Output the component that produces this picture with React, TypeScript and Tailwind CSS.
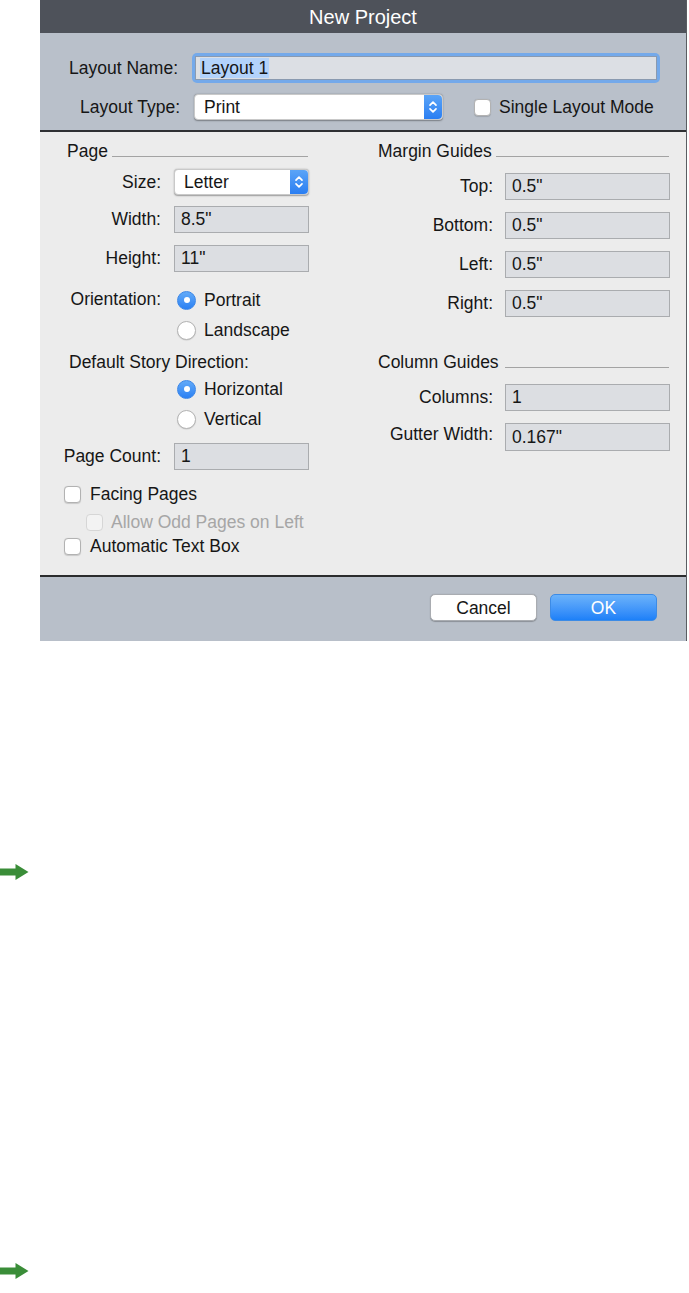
import React from 'react';

const FONT = { fontFamily: '"Liberation Sans", Arial, sans-serif' };

// blue up/down stepper on the right of a popup button
const Stepper = () => (
    <div className="w-[18px] h-full rounded-r-[4px] bg-gradient-to-b from-[#5aa4f7] to-[#2a7ef2] flex items-center justify-center">
        <svg width="10" height="14" viewBox="0 0 10 14" fill="none" stroke="white" strokeWidth="1.7" strokeLinecap="round" strokeLinejoin="round">
            <path d="M2 5.2 L5 2.2 L8 5.2" />
            <path d="M2 8.8 L5 11.8 L8 8.8" />
        </svg>
    </div>
);

const Select: React.FC<{ value: string; width: string }> = ({ value, width }) => (
    <div className={`${width} h-[26px] flex rounded-[4px] bg-white shadow-[0_0.5px_1.5px_rgba(0,0,0,0.35)] border border-[#c9c9c9]`}>
        <div className="flex-1 flex items-center pl-[9px] text-[#161616]">{value}</div>
        <Stepper />
    </div>
);

const Field: React.FC<{ value: string; width: string; h?: string }> = ({ value, width, h = 'h-[27px]' }) => (
    <div className={`${width} ${h} flex items-center pl-[6px] bg-[#dcdee2] border border-[#aaacaf] text-[#161616]`}>
        {value}
    </div>
);

const Radio: React.FC<{ on?: boolean }> = ({ on }) =>
    on ? (
        <div className="w-[19px] h-[19px] rounded-full bg-gradient-to-b from-[#62aaf8] to-[#2a80f3] border border-[#3a86e8] flex items-center justify-center">
            <div className="w-[6px] h-[6px] rounded-full bg-white" />
        </div>
    ) : (
        <div className="w-[19px] h-[19px] rounded-full bg-white border border-[#b4b4b4] shadow-[0_0.5px_1px_rgba(0,0,0,0.15)]" />
    );

const Check: React.FC<{ disabled?: boolean }> = ({ disabled }) => (
    <div
        className={`w-[17px] h-[17px] rounded-[4px] border ${disabled ? 'bg-[#f3f3f3] border-[#d6d6d6]' : 'bg-white border-[#b2b2b2] shadow-[0_0.5px_1px_rgba(0,0,0,0.15)]'}`}
    />
);

const Header: React.FC<{ title: string; pad: string; gap: string; end: string }> = ({ title, pad, gap, end }) => (
    <div className={`flex items-end h-[22px] ${pad} ${end}`}>
        <span className="leading-[22px]">{title}</span>
        <div className={`flex-1 ${gap} mb-[5px] h-px bg-[#a3a3a3]`} />
    </div>
);

const Arrow = () => (
    <svg width="29" height="16" viewBox="0 0 29 16">
        <path d="M0 4.5 H15.5 V0 L28.5 8 L15.5 16 V11.5 H0 Z" fill="#3a8d38" />
    </svg>
);

export default function App() {
    return (
        <div className="bg-white min-h-[1293px] text-[17.5px]" style={FONT}>
            <div className="ml-[40px] w-[647px] border-r border-[#5a5d62]">
                {/* title bar */}
                <div className="h-[33px] bg-[#4e525a] flex items-center justify-center text-white text-[20px] font-medium">
                    New Project
                </div>

                {/* top section */}
                <div className="bg-[#b9c0ca] pt-[20px] pb-[10px] border-b-2 border-[#2f3033]">
                    <div className="flex items-center h-[30px]">
                        <div className="w-[138px] text-right text-[#161616]">Layout Name:</div>
                        <div className="ml-[14px] w-[468px] h-[30px] rounded-[5px] bg-[#74a9ea] p-[3px]">
                            <div className="h-full bg-[#dcdfe4] border border-[#8a9ab0] flex items-center pl-[4px]">
                                <span className="bg-[#b3d3fb] leading-[20px] px-[1px] text-[#161616]">Layout 1</span>
                            </div>
                        </div>
                    </div>
                    <div className="flex items-center h-[26px] mt-[11px]">
                        <div className="w-[140px] text-right text-[#161616]">Layout Type:</div>
                        <div className="ml-[14px]">
                            <Select value="Print" width="w-[249px]" />
                        </div>
                        <div className="ml-[31px]">
                            <Check />
                        </div>
                        <span className="ml-[8px] text-[#161616]">Single Layout Mode</span>
                    </div>
                </div>

                {/* main panel */}
                <div className="bg-[#ececec] h-[445px] grid grid-cols-[300px_1fr] border-b-2 border-[#2a2b2d] text-[#161616]">
                    {/* left column */}
                    <div className="pt-[8px]">
                        <Header title="Page" pad="pl-[27px]" gap="ml-[4px]" end="mr-[32px]" />
                        <div className="flex items-center h-[26px] mt-[7px]">
                            <div className="w-[121px] text-right">Size:</div>
                            <div className="ml-[13px]">
                                <Select value="Letter" width="w-[135px]" />
                            </div>
                        </div>
                        <div className="flex items-center h-[27px] mt-[11px]">
                            <div className="w-[121px] text-right">Width:</div>
                            <div className="ml-[13px]">
                                <Field value={'8.5"'} width="w-[135px]" />
                            </div>
                        </div>
                        <div className="flex items-center h-[27px] mt-[12px]">
                            <div className="w-[121px] text-right">Height:</div>
                            <div className="ml-[13px]">
                                <Field value={'11"'} width="w-[135px]" />
                            </div>
                        </div>
                        <div className="flex items-center h-[20px] mt-[18px]">
                            <div className="w-[121px] text-right -mt-[2px]">Orientation:</div>
                            <div className="ml-[16px]">
                                <Radio on />
                            </div>
                            <span className="ml-[8px]">Portrait</span>
                        </div>
                        <div className="flex items-center h-[20px] mt-[10px] pl-[137px]">
                            <Radio />
                            <span className="ml-[8px]">Landscape</span>
                        </div>
                        <div className="flex items-center h-[20px] mt-[12px] pl-[29px]">Default Story Direction:</div>
                        <div className="flex items-center h-[20px] mt-[7px] pl-[137px]">
                            <Radio on />
                            <span className="ml-[8px]">Horizontal</span>
                        </div>
                        <div className="flex items-center h-[20px] mt-[10px] pl-[137px]">
                            <Radio />
                            <span className="ml-[8px]">Vertical</span>
                        </div>
                        <div className="flex items-center h-[27px] mt-[14px]">
                            <div className="w-[121px] text-right">Page Count:</div>
                            <div className="ml-[13px]">
                                <Field value="1" width="w-[135px]" />
                            </div>
                        </div>
                        <div className="flex items-center h-[18px] mt-[15px] pl-[24px]">
                            <Check />
                            <span className="ml-[9px]">Facing Pages</span>
                        </div>
                        <div className="flex items-center h-[18px] mt-[10px] pl-[46px]">
                            <Check disabled />
                            <span className="ml-[8px] text-[#a6a6a6]">Allow Odd Pages on Left</span>
                        </div>
                        <div className="flex items-center h-[18px] mt-[6px] pl-[24px]">
                            <Check />
                            <span className="ml-[9px]">Automatic Text Box</span>
                        </div>
                    </div>

                    {/* right column */}
                    <div className="pt-[8px]">
                        <Header title="Margin Guides" pad="pl-[38px]" gap="ml-[4px]" end="mr-[17px]" />
                        {[
                            ['Top:', 'mt-[11px]'],
                            ['Bottom:', 'mt-[12px]'],
                            ['Left:', 'mt-[12px]'],
                            ['Right:', 'mt-[12px]'],
                        ].map(([label, mt]) => (
                            <div key={label} className={`flex items-center h-[27px] ${mt}`}>
                                <div className="w-[153px] text-right">{label}</div>
                                <div className="ml-[12px]">
                                    <Field value={'0.5"'} width="w-[165px]" />
                                </div>
                            </div>
                        ))}
                        <div className="mt-[34px]">
                            <Header title="Column Guides" pad="pl-[38px]" gap="ml-[6px]" end="mr-[17px]" />
                        </div>
                        <div className="flex items-center h-[27px] mt-[11px]">
                            <div className="w-[153px] text-right">Columns:</div>
                            <div className="ml-[12px]">
                                <Field value="1" width="w-[165px]" />
                            </div>
                        </div>
                        <div className="flex items-start h-[28px] mt-[12px]">
                            <div className="w-[153px] text-right leading-[22px]">Gutter Width:</div>
                            <div className="ml-[12px]">
                                <Field value={'0.167"'} width="w-[165px]" h="h-[28px]" />
                            </div>
                        </div>
                    </div>
                </div>

                {/* footer */}
                <div className="bg-[#b8bfc9] h-[64px] flex justify-end items-start pt-[17px] pr-[29px] gap-[13px]">
                    <button className="w-[107px] h-[27px] rounded-[5px] bg-white border border-[#a9acb1] shadow-[0_0.5px_1px_rgba(0,0,0,0.25)] text-[#161616]">
                        Cancel
                    </button>
                    <button className="w-[107px] h-[27px] rounded-[5px] bg-gradient-to-b from-[#6bb2fa] to-[#1c80f8] border border-[#3c8be6] text-white">
                        OK
                    </button>
                </div>
            </div>

            {/* arrows below */}
            <div className="mt-[223px]">
                <Arrow />
            </div>
            <div className="mt-[383px]">
                <Arrow />
            </div>
        </div>
    );
}
